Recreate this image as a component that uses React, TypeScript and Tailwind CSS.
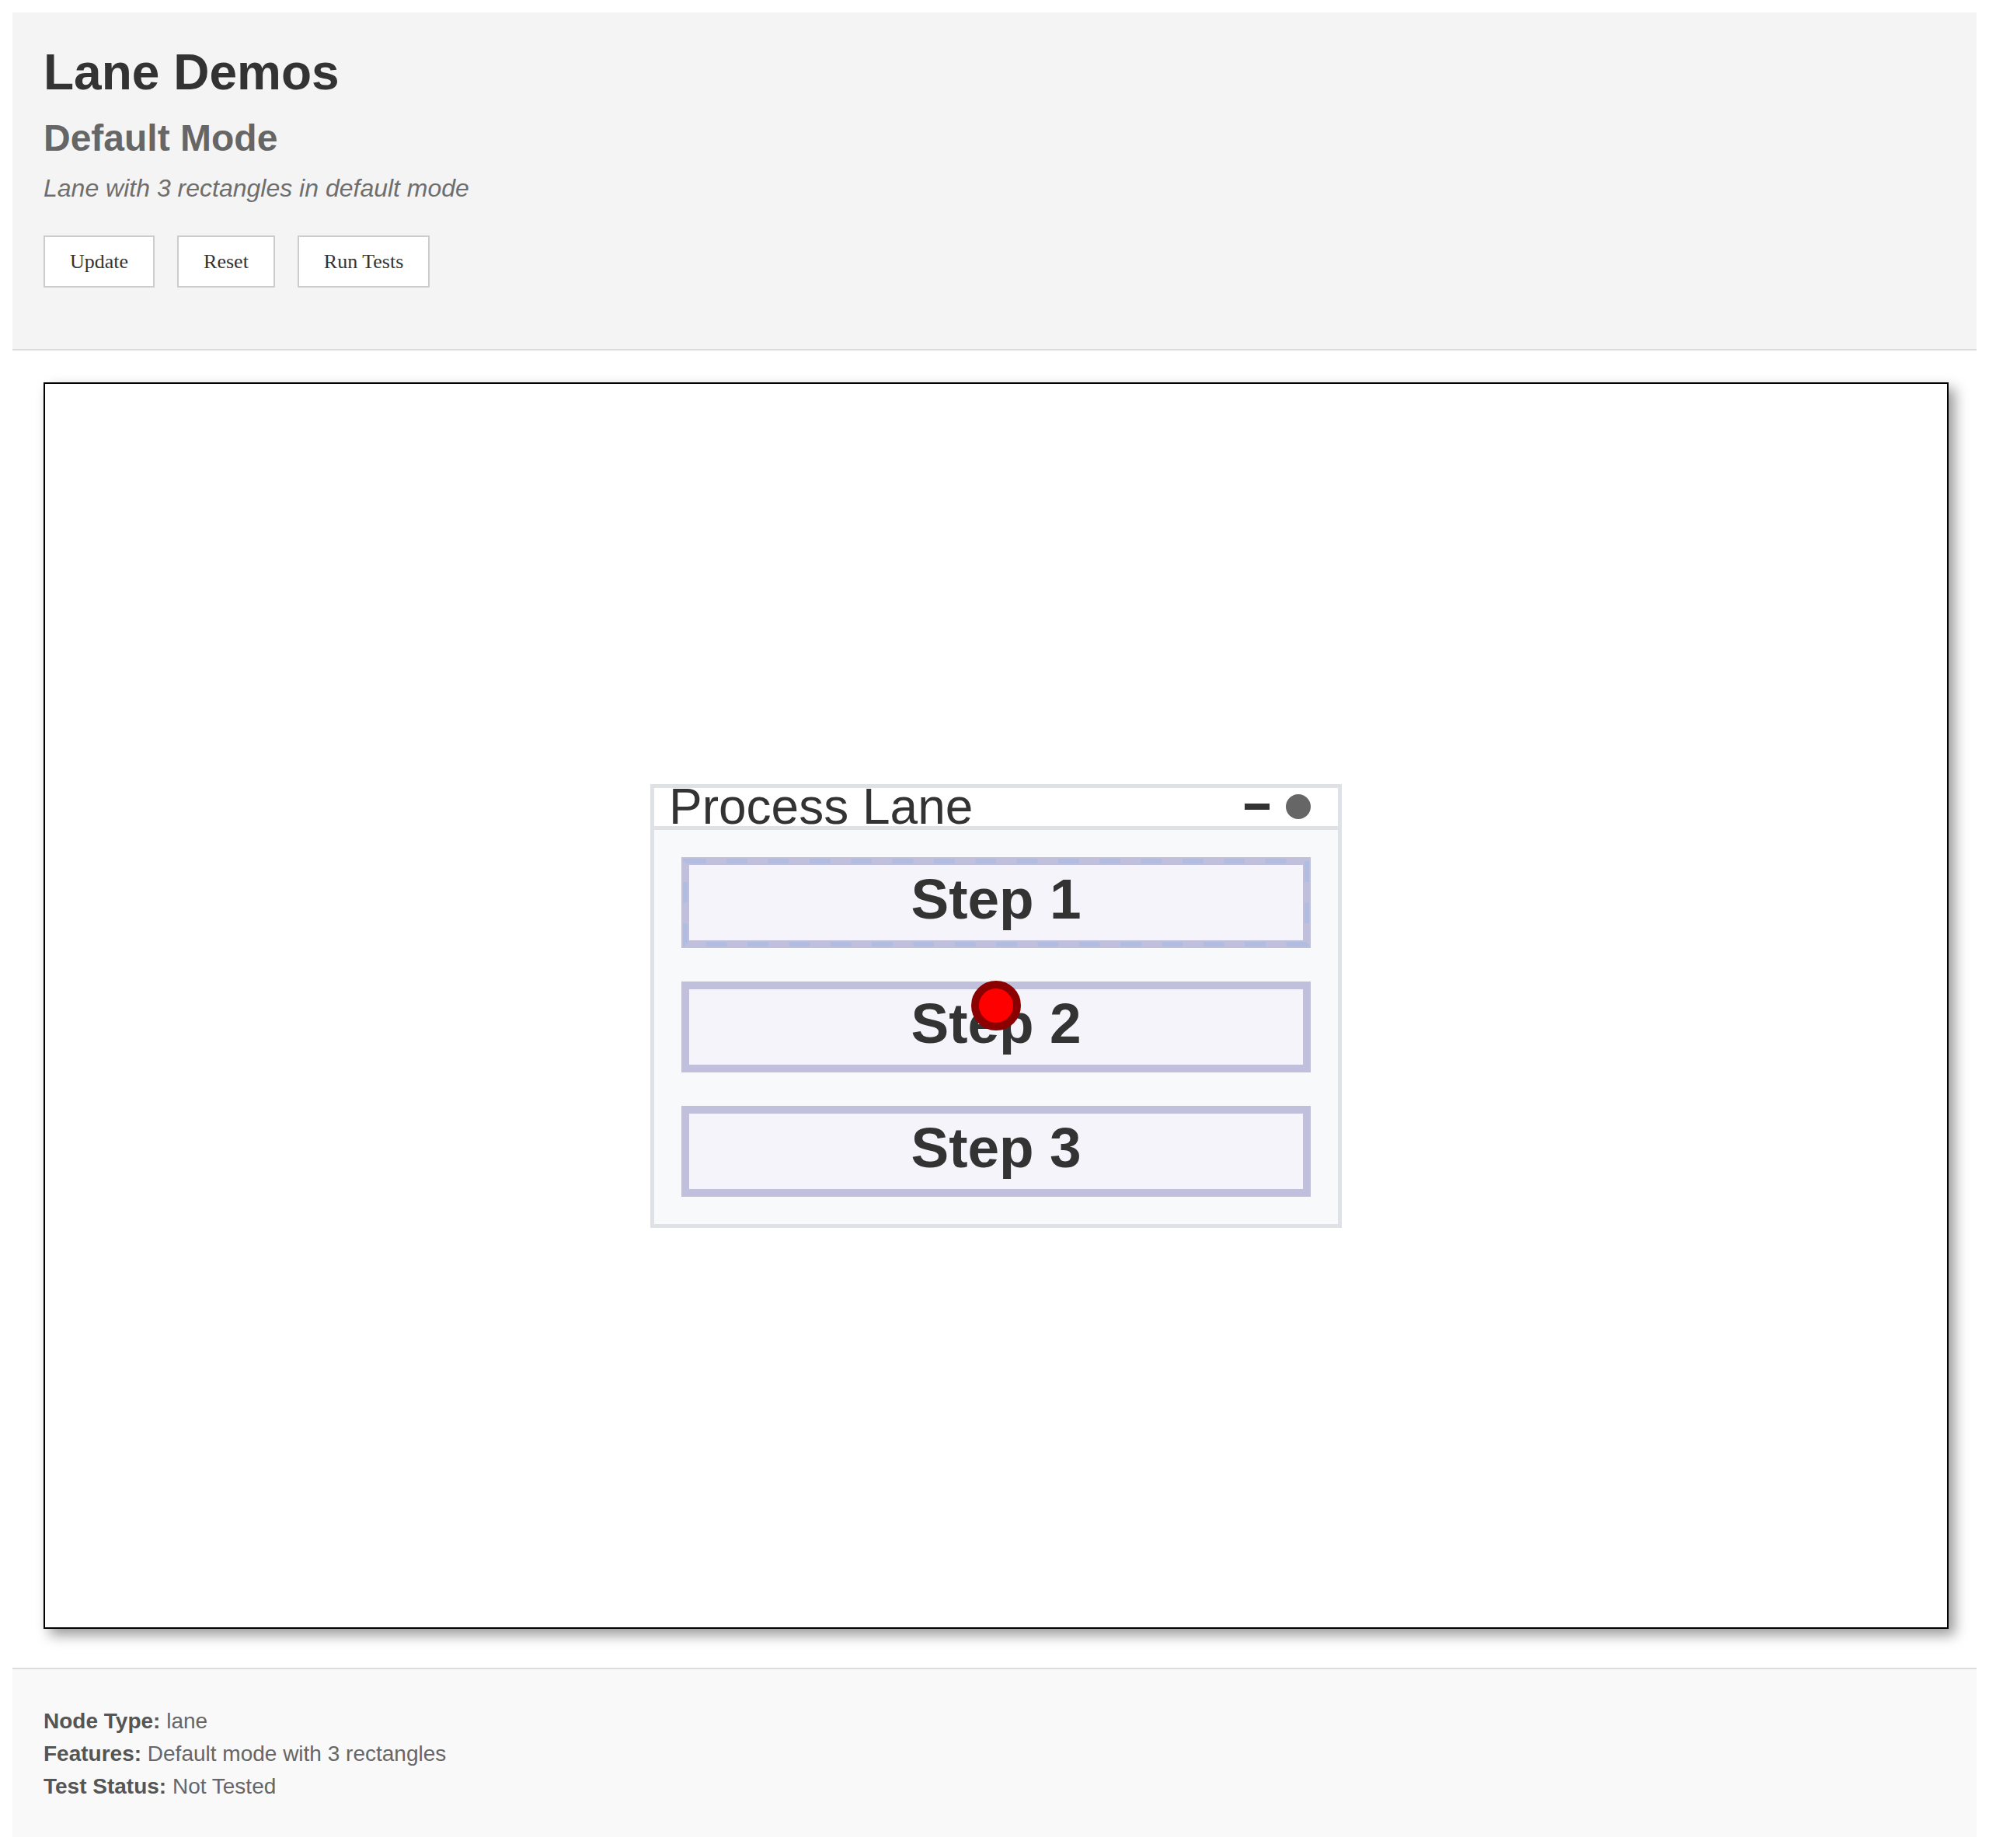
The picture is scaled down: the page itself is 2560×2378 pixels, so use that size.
// Lane demo page: header controls, diagram canvas with one lane node, info footer
const STEPS = ["Step 1", "Step 2", "Step 3"];

const INFO = [
  { label: "Node Type:", value: "lane" },
  { label: "Features:", value: "Default mode with 3 rectangles" },
  { label: "Test Status:", value: "Not Tested" },
];

function StepRect({ label, selected }: { label: string; selected?: boolean }) {
  return (
    <div className="relative h-[117px] border-[10px] border-[#c0c0dc] bg-[#f4f4fa] flex items-center justify-center pb-[10px]">
      <span className="text-[73px] font-bold leading-none text-[#333] whitespace-nowrap">{label}</span>
      {selected && (
        <svg className="absolute -inset-[10px] pointer-events-none" width="810" height="117" viewBox="0 0 810 117">
          <rect x="5" y="5" width="800" height="107" fill="none" stroke="#b0bce0" strokeWidth="6" strokeDasharray="26.67 26.67" />
        </svg>
      )}
    </div>
  );
}

function LaneNode() {
  return (
    <div className="w-[890px] h-[571px] border-[5px] border-[#dee1e6] bg-[#f8f9fa] flex flex-col">
      {/* lane header */}
      <div className="h-[54px] shrink-0 bg-white border-b-[5px] border-[#dee1e6] flex items-center pl-[19px] pr-[35px]">
        <span className="text-[64px] leading-[49px] text-[#333] whitespace-nowrap">Process Lane</span>
        <div className="ml-auto w-[32px] h-[8px] bg-[#333]" />
        <div className="ml-[21px] w-[32px] h-[32px] rounded-full bg-[#666]" />
      </div>
      {/* lane body */}
      <div className="flex-1 px-[35px] pt-[35px] flex flex-col gap-[43px]">
        {STEPS.map((s, i) => (
          <StepRect key={s} label={s} selected={i === 0} />
        ))}
      </div>
    </div>
  );
}

export default function App() {
  return (
    <div className="p-[16px] bg-white font-['Liberation_Sans',Arial,sans-serif]">
      <header className="bg-[#f4f4f4] border-b-2 border-[#ddd] px-[40px] pt-[40px] pb-[79px]">
        <h1 className="text-[64px] font-bold leading-[74px] text-[#333]">Lane Demos</h1>
        <h2 className="mt-[20px] text-[48px] font-bold leading-[55px] text-[#666]">Default Mode</h2>
        <p className="mt-[19px] text-[32px] italic leading-[37px] text-[#6e6e6e]">Lane with 3 rectangles in default mode</p>
        <div className="mt-[42px] flex gap-[29px]">
          {["Update", "Reset", "Run Tests"].map((b) => (
            <button
              key={b}
              className="bg-white border-2 border-[#ccc] px-[32px] py-[16px] text-[26px] leading-[31px] text-[#333] font-['Liberation_Serif','Times_New_Roman',serif]"
            >
              {b}
            </button>
          ))}
        </div>
      </header>

      {/* diagram canvas */}
      <div className="relative mt-[41px] ml-[40px] w-[2452px] h-[1604px] border-2 border-black bg-white shadow-[8px_8px_16px_rgba(0,0,0,0.4)] flex items-center justify-center">
        <LaneNode />
        <div className="absolute left-1/2 top-1/2 -translate-x-1/2 -translate-y-1/2 w-[64px] h-[64px] rounded-full bg-[#ff0000] border-[10px] border-[#8b0000]" />
      </div>

      <footer className="mt-[50px] bg-[#f9f9f9] border-t-2 border-[#ddd] px-[40px] pt-[46px] pb-[44px]">
        {INFO.map(({ label, value }) => (
          <p key={label} className="text-[28px] leading-[42px] text-[#666]">
            <strong className="font-bold text-[#555]">{label}</strong> {value}
          </p>
        ))}
      </footer>
    </div>
  );
}
